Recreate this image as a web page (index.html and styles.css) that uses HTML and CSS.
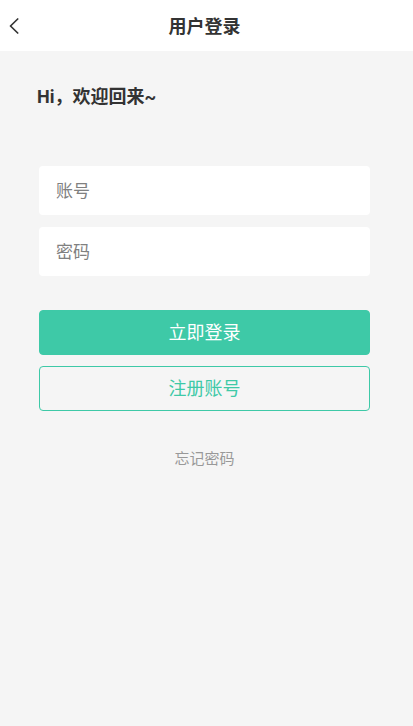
FILE: index.html
```html
<!DOCTYPE html>
<html lang="zh-CN">
<head>
<meta charset="utf-8">
<meta name="viewport" content="width=device-width, initial-scale=1">
<title>用户登录</title>
<link rel="stylesheet" href="styles.css">
</head>
<body>
<header class="navbar">
  <a class="back" href="#" aria-label="返回">
    <svg viewBox="0 0 10 16" width="10" height="16" aria-hidden="true"><path d="M8.7 1 1.5 8l7.2 7"/></svg>
  </a>
  <h1 class="title">用户登录</h1>
</header>
<main class="page">
  <h2 class="greeting">Hi，欢迎回来~</h2>
  <form class="form">
    <input class="field" type="text" placeholder="账号" aria-label="账号">
    <input class="field" type="password" placeholder="密码" aria-label="密码">
    <div class="actions">
      <button class="button primary" type="submit">立即登录</button>
      <button class="button outline" type="button">注册账号</button>
    </div>
  </form>
  <a class="forgot" href="#">忘记密码</a>
</main>
</body>
</html>
```
FILE: styles.css
```css
* { box-sizing: border-box; }

body {
  margin: 0;
  min-height: 100vh;
  background: #f5f5f5;
  color: #333;
  font-family: Roboto, "Noto Sans CJK SC", sans-serif;
}

.navbar {
  display: grid;
  grid-template-columns: 32px 1fr 36px;
  align-items: center;
  height: 51px;
  background: #fff;
}

.back {
  display: flex;
  padding: 8px 0 8px 9px;
}

.back svg {
  fill: none;
  stroke: #333;
  stroke-width: 1.7;
  stroke-linecap: round;
  stroke-linejoin: round;
}

.title {
  margin: 0;
  padding-top: 2px;
  font-size: 18px;
  line-height: 26px;
  text-align: center;
}

.page {
  display: flex;
  flex-direction: column;
  padding: 32px 43px 32px 39px;
}

.greeting {
  margin: 0 0 55px -2px;
  font-size: 18px;
  line-height: 28px;
}

.form {
  display: flex;
  flex-direction: column;
  gap: 12px;
}

.field {
  width: 100%;
  height: 49px;
  padding: 0 17px;
  border: 0;
  border-radius: 4px;
  background: #fff;
  color: #333;
  font: inherit;
  font-size: 17px;
}

.field::placeholder {
  color: #808080;
  opacity: 1;
}

.actions {
  display: flex;
  flex-direction: column;
  gap: 11px;
  margin-top: 22px;
}

.button {
  height: 45px;
  padding: 0 0 3px;
  border: 1px solid #3ec9a7;
  border-radius: 4px;
  font: inherit;
  font-size: 18px;
}

.primary {
  background: #3ec9a7;
  color: #fff;
}

.outline {
  background: transparent;
  color: #3ec9a7;
}

.forgot {
  align-self: center;
  margin-top: 36px;
  color: #999;
  font-size: 15px;
  line-height: 24px;
  text-decoration: none;
}
```
